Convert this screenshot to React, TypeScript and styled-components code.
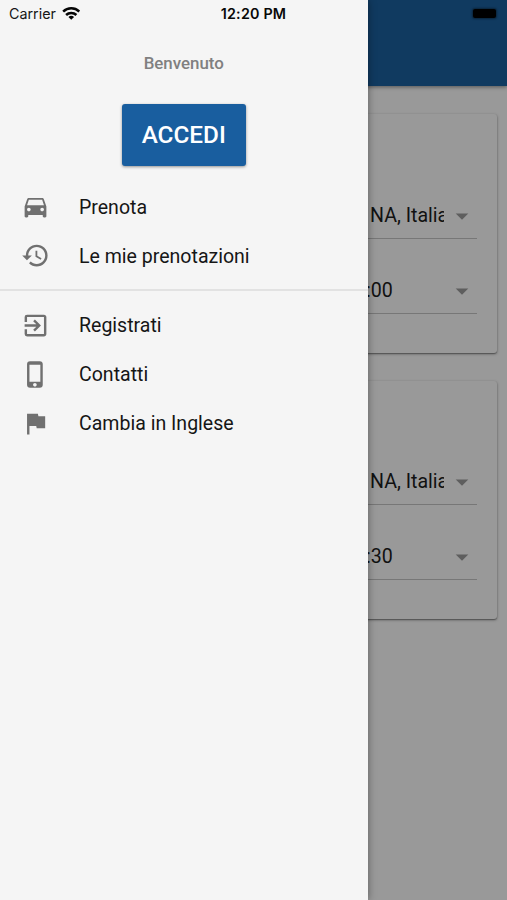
import React from "react";
import styled, { createGlobalStyle } from "styled-components";
import {
  MdDirectionsCar,
  MdHistory,
  MdExitToApp,
  MdPhoneIphone,
  MdFlag,
  MdArrowDropDown,
} from "react-icons/md";

const GlobalStyle = createGlobalStyle`
  * { box-sizing: border-box; }
  body { margin: 0; font-family: Roboto, sans-serif; }
`;

const Screen = styled.div`
  position: relative;
  width: 507px;
  height: 900px;
  overflow: hidden;
  background: #999;
`;

const AppBar = styled.header`
  height: 86px;
  background: #103a60;
  box-shadow: 0 1px 4px rgba(0, 0, 0, 0.45);
`;

const Content = styled.main`
  display: flex;
  flex-direction: column;
  gap: 28px;
  padding: 28px 10px;
`;

const Card = styled.section`
  height: 238.5px;
  padding: 76px 20px 0;
  border-radius: 3px;
  background: #999;
  box-shadow: 0 1px 3px rgba(0, 0, 0, 0.38), 0 1px 1px rgba(0, 0, 0, 0.25);
`;

const Fields = styled.div`
  display: flex;
  flex-direction: column;
  gap: 26px;
  margin-left: auto;
  width: 137px;
`;

const Field = styled.div`
  display: flex;
  align-items: center;
  height: 48.8px;
  padding-top: 4px;
  border-bottom: 1.5px solid #777;
  color: #111;
  font-size: 19.6px;
`;

const Value = styled.span<{ $indent: number }>`
  width: 104px;
  padding-left: ${(p) => p.$indent}px;
  overflow: hidden;
  white-space: nowrap;
  line-height: 28px;
`;

const Caret = styled(MdArrowDropDown)`
  width: 30px;
  height: 30px;
  margin-left: 3.5px;
  flex: none;
  color: #5e5e5e;
`;

const Drawer = styled.aside`
  position: absolute;
  inset: 0 auto 0 0;
  width: 367.5px;
  padding-top: 51px;
  display: flex;
  flex-direction: column;
  background: #f5f5f5;
  box-shadow: 0 0 8px rgba(0, 0, 0, 0.4);
`;

const Welcome = styled.div`
  height: 24px;
  line-height: 24px;
  text-align: center;
  color: #808080;
  font-size: 16.9px;
  font-weight: 500;
`;

const LoginButton = styled.button`
  align-self: center;
  width: 124px;
  height: 62px;
  margin: 29px 0 17px;
  padding: 0 0 2px;
  border: 0;
  border-radius: 3px;
  background: #195e9f;
  box-shadow: 0 1px 3px rgba(0, 0, 0, 0.4);
  color: #fff;
  font: 500 24.3px Roboto, sans-serif;
`;

const Menu = styled.nav`
  display: flex;
  flex-direction: column;
`;

const MenuItem = styled.a`
  display: flex;
  align-items: center;
  gap: 29.5px;
  height: 48.8px;
  padding-left: 20.5px;
  color: #161616;
  font-size: 19.55px;

  svg {
    width: 29px;
    height: 29px;
    margin-bottom: 1px;
    color: #707070;
  }
`;

const Divider = styled.hr`
  width: 100%;
  height: 2px;
  margin: 8px 0 11px;
  border: 0;
  background: #e2e2e2;
`;

const StatusBar = styled.div`
  position: absolute;
  inset: 0 0 auto 0;
  height: 27px;
  padding: 0 11px 0 9px;
  display: grid;
  grid-template-columns: 1fr auto 1fr;
  align-items: center;
  color: #161616;
  font: 400 14.3px Inter, sans-serif;
`;

const Carrier = styled.div`
  display: flex;
  align-items: center;
  gap: 6px;
`;

const Clock = styled.div`
  color: #080808;
  font-weight: 600;
  letter-spacing: 0.2px;
  padding-left: 2px;
`;

const Battery = styled.div`
  justify-self: end;
  width: 23px;
  height: 9px;
  border-radius: 2px;
  background: #000;
  box-shadow: 0 0 2px 1px rgba(0, 0, 0, 0.4);
`;

const WifiIcon = () => (
  <svg width="18.5" height="15" viewBox="0 0 19 15" fill="none" stroke="#050505" strokeWidth="2.6">
    <path d="M1.2 5.5a12 12 0 0 1 16.6 0" />
    <path d="M4.2 9a7.7 7.7 0 0 1 10.6 0" />
    <path d="M9.5 14 6.6 11.2a4.2 4.2 0 0 1 5.8 0Z" fill="#050505" stroke="none" />
  </svg>
);

const bookings = [
  { place: "NA, Italia", time: ":00" },
  { place: "NA, Italia", time: ":30" },
];

export default function App() {
  return (
    <Screen>
      <GlobalStyle />
      <AppBar />
      <Content>
        {bookings.map((b) => (
          <Card key={b.time}>
            <Fields>
              <Field>
                <Value $indent={30}>{b.place}</Value>
                <Caret />
              </Field>
              <Field>
                <Value $indent={26}>{b.time}</Value>
                <Caret />
              </Field>
            </Fields>
          </Card>
        ))}
      </Content>
      <Drawer>
        <Welcome>Benvenuto</Welcome>
        <LoginButton>ACCEDI</LoginButton>
        <Menu>
          <MenuItem><MdDirectionsCar />Prenota</MenuItem>
          <MenuItem><MdHistory />Le mie prenotazioni</MenuItem>
          <Divider />
          <MenuItem><MdExitToApp />Registrati</MenuItem>
          <MenuItem><MdPhoneIphone />Contatti</MenuItem>
          <MenuItem><MdFlag />Cambia in Inglese</MenuItem>
        </Menu>
      </Drawer>
      <StatusBar>
        <Carrier>Carrier<WifiIcon /></Carrier>
        <Clock>12:20 PM</Clock>
        <Battery />
      </StatusBar>
    </Screen>
  );
}
